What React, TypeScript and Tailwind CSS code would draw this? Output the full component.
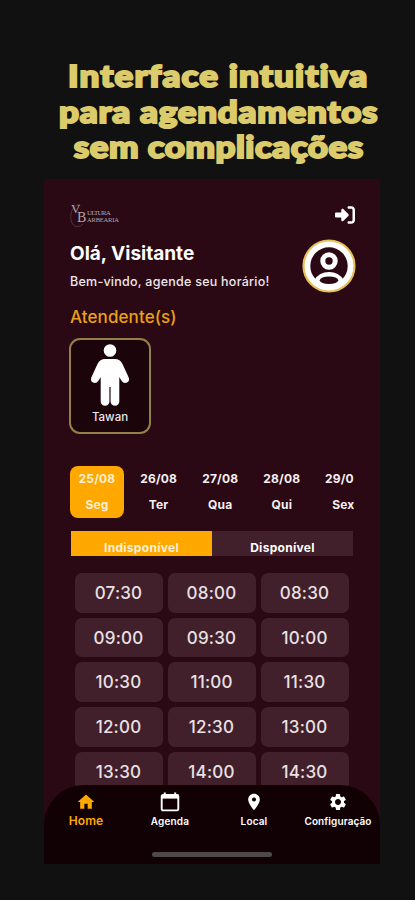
import { FaRightToBracket } from "react-icons/fa6";
import { MdHome, MdLocationOn, MdSettings } from "react-icons/md";

const days = [
  { date: "25/08", weekday: "Seg" },
  { date: "26/08", weekday: "Ter" },
  { date: "27/08", weekday: "Qua" },
  { date: "28/08", weekday: "Qui" },
  { date: "29/0", weekday: "Sex" }
];

const times = [
  "07:30", "08:00", "08:30",
  "09:00", "09:30", "10:00",
  "10:30", "11:00", "11:30",
  "12:00", "12:30", "13:00",
  "13:30", "14:00", "14:30"
];

function CalendarIcon({ size }: { size: number }) {
  return (
    <svg width={size} height={size} viewBox="0 0 20 20" fill="none" stroke="currentColor">
      <rect x="1.700" y="3" width="16.600" height="15.400" rx="1.300" strokeWidth="1.900" />
      <path d="M2 4.800H18" strokeWidth="3.600" />
      <path d="M4.800 0.500V4M15.200 0.500V4" strokeWidth="2" />
    </svg>
  );
}

const tabs = [
  { label: "Home", icon: MdHome, className: "text-[12px] tracking-[0.1px]" },
  { label: "Agenda", icon: CalendarIcon, className: "text-[10px] tracking-[0.15px]" },
  { label: "Local", icon: MdLocationOn, className: "text-[10px] tracking-[0.15px]" },
  { label: "Configuração", icon: MdSettings, className: "text-[10px] tracking-[0.1px]" }
];

function Headline() {
  return (
    <h1 className="flex h-[179px] w-[436px] shrink-0 scale-x-[1.13] flex-col items-center self-center whitespace-nowrap pt-[58px] font-['Lato'] text-[31px] font-black leading-[35.5px] text-[#dccb6b] [-webkit-text-stroke:2px_#dccb6b]">
      <span className="pl-[18px] tracking-[1px]">Interface intuitiva</span>
      <span className="pl-[19px] tracking-[0.65px]">para agendamentos</span>
      <span className="pl-[19px] tracking-[0.4px]">sem complicações</span>
    </h1>
  );
}

function Logo() {
  return (
    <div className="relative h-[26px] w-[52px] font-['Liberation_Serif'] leading-none text-[#b3a6aa]">
      <svg className="absolute inset-0" width="52" height="26" viewBox="0 0 52 26" fill="none">
        <path d="M10 2.500C-1 3-2 22 6 24.500Q11 25 13 22" stroke="#5c4650" strokeWidth="0.7" />
      </svg>
      <span className="absolute left-[1px] top-[2px] text-[13px] leading-[9px]">V</span>
      <span className="absolute left-[7px] top-[11px] text-[14px] leading-[9px]">B</span>
      <span className="absolute left-[17px] top-[8px] text-[7px] leading-[6px] tracking-[-0.8px]">ULTURA</span>
      <span className="absolute left-[17px] top-[15px] text-[6.500px] leading-[6px] tracking-[-0.2px]">ARBEARIA</span>
    </div>
  );
}

function Avatar() {
  return (
    <svg width="54" height="54" viewBox="0 0 54 54" fill="none">
      <circle cx="27" cy="27" r="25.500" fill="#fff" stroke="#e6c058" strokeWidth="2.200" />
      <circle cx="27" cy="27" r="18.700" fill="#2b0914" />
      <circle cx="27" cy="22" r="6.200" stroke="#fff" strokeWidth="5" />
      <path d="M12.500 41Q17 33 27 33T41.500 41L36 47H18Z" fill="#fff" />
      <ellipse cx="27" cy="41.200" rx="9.200" ry="3.800" fill="#2b0914" />
    </svg>
  );
}

function PersonIcon() {
  return (
    <svg width="40" height="62" viewBox="0 0 40 62" fill="#fff">
      <circle cx="20" cy="6.500" r="6.300" />
      <path d="M15 15h10q5 0 7.500 5l6.200 13.500q1.200 3.600-1.700 5-3.300 1.400-5.500-1.800L29.300 33v24.500a4 4 0 0 1-8.700 0V43h-1.200v14.500a4 4 0 0 1-8.700 0V33l-2.200 3.700q-2.200 3.200-5.500 1.800-2.900-1.400-1.700-5L7.500 20Q10 15 15 15Z" />
    </svg>
  );
}

function BottomNav() {
  return (
    <nav className="absolute inset-x-0 bottom-0 h-[79px] rounded-t-[40px] bg-[#110104]">
      <div className="grid grid-cols-4">
        {tabs.map(({ label, icon: Icon, className }, index) => (
          <div
            key={label}
            className={`flex flex-col items-center pt-[7px] font-semibold ${index === 0 ? "text-[#ffa800]" : "text-white"}`}
          >
            <Icon size={20} />
            <span className={`mt-[1px] whitespace-nowrap leading-4 ${className}`}>{label}</span>
          </div>
        ))}
      </div>
      <div className="mx-auto mt-[23px] h-[5px] w-[120px] rounded-full bg-[#4d4949]" />
    </nav>
  );
}

export default function App() {
  return (
    <div className="flex h-[900px] w-[415px] flex-col overflow-hidden bg-[#111111] font-['Inter',sans-serif] text-white">
      <Headline />
      <main className="relative ml-[44px] h-[685px] w-[336px] shrink-0 overflow-hidden bg-[#2b0914] pl-[26px] pr-[26px] pt-[23px]">
        <header className="flex h-[26px] items-center justify-between">
          <Logo />
          <FaRightToBracket size={20} className="mr-[-0.5px]" />
        </header>
        <section className="flex h-[76px] justify-between">
          <div className="whitespace-nowrap pt-[14px]">
            <h2 className="text-[19px] font-bold leading-6">Olá, Visitante</h2>
            <p className="mt-[6px] text-[12.500px] font-medium leading-5 tracking-[0.25px] text-[#eee7e9]">
              Bem-vindo, agende seu horário!
            </p>
          </div>
          <div className="mr-[-2px] pt-[11px]">
            <Avatar />
          </div>
        </section>
        <h3 className="pt-px text-[17px] font-medium leading-6 tracking-[0.1px] text-[#eaa019]">Atendente(s)</h3>
        <div className="ml-[-1px] mt-[9px] flex h-[96px] w-[82px] flex-col items-center rounded-[11px] border-2 border-[#928049] bg-[#1c040b] pt-[4px]">
          <PersonIcon />
          <span className="mt-[3px] text-[11.500px] font-medium leading-4 text-[#eee7e9]">Tawan</span>
        </div>
        <div className="mt-[32px] flex gap-[7.600px] overflow-hidden text-[12px] font-bold">
          {days.map((day, index) => (
            <div
              key={day.date}
              className={`flex h-[52px] w-[54px] shrink-0 flex-col items-center rounded-[8px] pt-[5px] leading-4 tracking-[0.2px] ${index === 0 ? "bg-[#ffa800] text-[#fff0d5]" : "text-[#f5eff0]"}`}
            >
              <span className={index === 4 ? "mr-[8px]" : ""}>{day.date}</span>
              <span className="mt-[10px]">{day.weekday}</span>
            </div>
          ))}
        </div>
        <div className="ml-[1px] mt-[13px] flex h-[25px] text-center text-[12px] font-bold leading-[33px] tracking-[0.3px]">
          <div className="w-[141px] bg-[#ffa800] text-[#fff0d5]">Indisponível</div>
          <div className="w-[141px] bg-[#41202b]">Disponível</div>
        </div>
        <div className="ml-[4.500px] mt-[17px] grid w-[274px] grid-cols-3 gap-[5px]">
          {times.map((time) => (
            <div
              key={time}
              className="flex h-[39.700px] items-center justify-center rounded-[7px] bg-[#41202b] pt-[2px] text-[17px] font-medium tracking-[0.2px] text-[#e9e1e3]"
            >
              {time}
            </div>
          ))}
        </div>
        <BottomNav />
      </main>
    </div>
  );
}
